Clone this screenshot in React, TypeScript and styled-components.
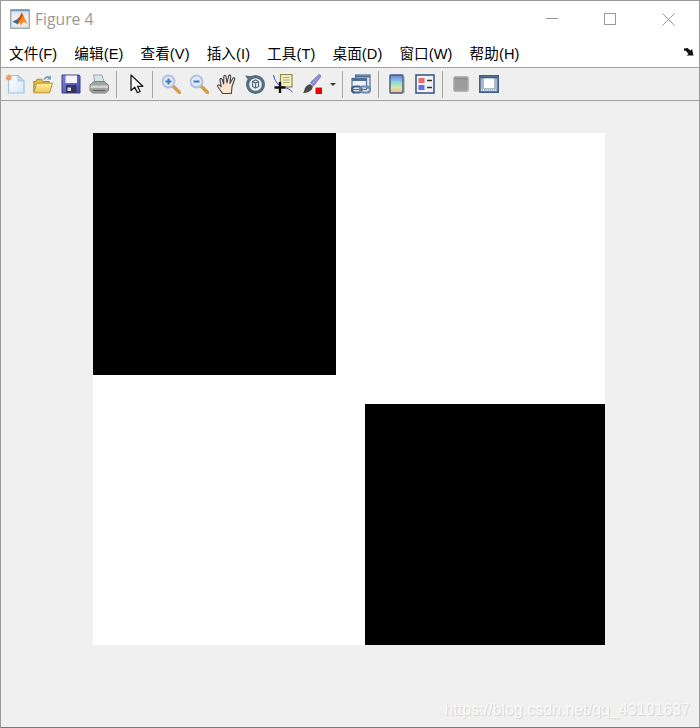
import React from 'react';
import styled, { createGlobalStyle } from 'styled-components';

const GlobalStyle = createGlobalStyle`
	html, body {
		margin: 0;
		padding: 0;
		background: #ffffff;
	}
	* {
		box-sizing: border-box;
	}
`;

const MENU_ITEMS = ['文件(F)', '编辑(E)', '查看(V)', '插入(I)', '工具(T)', '桌面(D)', '窗口(W)', '帮助(H)'];

function MatlabLogo() {
	return (
		<svg width="20" height="20" viewBox="0 0 20 20">
			<defs>
				<linearGradient id="logoBg" x1="0" y1="0" x2="0" y2="1">
					<stop offset="0" stopColor="#c9d9ea" />
					<stop offset="0.35" stopColor="#eef1f4" />
					<stop offset="1" stopColor="#e6e6e6" />
				</linearGradient>
			</defs>
			<rect x="0.7" y="0.7" width="18.6" height="18.6" fill="url(#logoBg)" stroke="#a3a9b0" strokeWidth="1.4" />
			<path d="M1 1.400h18" stroke="#6f97bf" strokeWidth="1.600" />
			<path d="M2.200 12.800l4.800-2.200 2.200-2.400-1.400 7.200-2.200-1.400z" fill="#1f6aa8" />
			<path d="M7 10.600l2.200-2.400L11.800 3.400l1.600 3.400-3.600 5.800-2 3z" fill="#c9461a" />
			<path d="M11.800 3.400c1.800 2 3 7 5.800 11.400-1.800-.6-2.800-1.800-3.800-1.800-1 0-2 2-3 3.400-.6-1.600-1-3-1.400-4.400l3.200-5z" fill="#f28c20" />
		</svg>
	);
}

function NewIcon() {
	return (
		<svg width="20" height="20" viewBox="0 0 20 20">
			<defs>
				<linearGradient id="newFill" x1="0" y1="0" x2="1" y2="1">
					<stop offset="0" stopColor="#ffffff" />
					<stop offset="1" stopColor="#d6e8fa" />
				</linearGradient>
			</defs>
			<path d="M3.500 1.500h9.500l6 5.500v12H3.500z" fill="url(#newFill)" stroke="#a4c2e6" strokeWidth="1.200" />
			<path d="M13 1.500v5.500h6z" fill="#c6dcf4" stroke="#a4c2e6" />
			<circle cx="3.800" cy="3.800" r="2.500" fill="#ec7f4a" />
			<path d="M3.800 0v7.600M0 3.800h7.600M1.100 1.100l5.400 5.400M6.500 1.100L1.100 6.500" stroke="#f0a883" strokeWidth="0.900" />
		</svg>
	);
}

function OpenIcon() {
	return (
		<svg width="20" height="20" viewBox="0 0 20 20">
			<defs>
				<linearGradient id="folderFill" x1="0" y1="0" x2="0" y2="1">
					<stop offset="0" stopColor="#fff0a4" />
					<stop offset="1" stopColor="#f2c654" />
				</linearGradient>
			</defs>
			<path d="M11 5.500c1.500-2.400 3.600-3 5.600-2.200" fill="none" stroke="#7e9cb5" strokeWidth="1.600" />
			<path d="M18 1.200v4.200h-4.200z" fill="#7e9cb5" />
			<path d="M0.800 18.500V7.500h2l1-2.200h5l1 2.200h6.500v2.500" fill="#e3b94c" stroke="#a88a3a" />
			<path d="M0.800 18.800l2.800-9.600h16l-3 9.600z" fill="url(#folderFill)" stroke="#b4933a" />
		</svg>
	);
}

function SaveIcon() {
	return (
		<svg width="20" height="20" viewBox="0 0 20 20">
			<defs>
				<linearGradient id="diskFill" x1="0" y1="0" x2="1" y2="1">
					<stop offset="0" stopColor="#7c82da" />
					<stop offset="1" stopColor="#4447a8" />
				</linearGradient>
			</defs>
			<path d="M1 1h17l1 1v17H1z" fill="url(#diskFill)" stroke="#3c3f8c" />
			<rect x="4.500" y="1.500" width="11.500" height="7.500" fill="#f2f2fb" />
			<path d="M5 11h10.500v8H5z" fill="#34345e" />
			<rect x="6.500" y="13.500" width="3.500" height="3.500" fill="#dcdcea" />
		</svg>
	);
}

function PrintIcon() {
	return (
		<svg width="20" height="20" viewBox="0 0 20 20">
			<path d="M4.500 1h8.500l2.500 8.500H6z" fill="#d6e4ec" stroke="#9aa8b0" />
			<path d="M1 11l4-3.500h10l4.500 3.500v5.500l-3 2.500H3.500L1 16.500z" fill="#a4a4a4" stroke="#808080" />
			<path d="M1.500 11.500h17.500v2.500H1.500z" fill="#d2d2d2" />
			<path d="M3.500 16.500h13" stroke="#636363" strokeWidth="1.200" />
		</svg>
	);
}

function ArrowIcon() {
	return (
		<svg width="20" height="20" viewBox="0 0 20 20">
			<path d="M4 1v15.500l3.800-3.200 2.600 5.400 2.700-1.200-2.600-5.200h5.400z" fill="#f6f6f6" stroke="#1c1c1c" strokeWidth="1.300" strokeLinejoin="round" />
		</svg>
	);
}

function ZoomIcon({ $plus }: { $plus: boolean }) {
	return (
		<svg width="20" height="20" viewBox="0 0 20 20">
			<path d="M11.500 11.500l7 7" stroke="#dd9a3e" strokeWidth="3.400" strokeLinecap="round" />
			<circle cx="7.500" cy="7.500" r="6" fill="#dfeaf7" stroke="#b1bfe0" strokeWidth="1.800" />
			<path d="M4.500 7.500h6" stroke="#3f7fb0" strokeWidth="2" />
			{$plus && <path d="M7.500 4.500v6" stroke="#3f7fb0" strokeWidth="2" />}
		</svg>
	);
}

function HandIcon() {
	return (
		<svg width="20" height="20" viewBox="0 0 20 20">
			<path
				d="M5.500 19.500C4 16.500 1.300 14.500.6 12.200c-.3-1.300 1.100-1.900 2-1l1.600 1.600L3 6c-.2-1.500 1.600-2 2.200-.5l1.500 4.500L6.800 2.500C6.900 1 8.800 1 9 2.500l1 6.500L11.600 2c.3-1.400 2.200-1 2.100.4l-.8 7 2.800-5c.7-1.200 2.400-.5 1.900.8l-2.600 7.300-.6 7z"
				fill="#fbe3cf"
				stroke="#44444e"
				strokeWidth="1.100"
				strokeLinejoin="round"
			/>
		</svg>
	);
}

function RotateIcon() {
	return (
		<svg width="20" height="20" viewBox="0 0 20 20">
			<circle cx="10.500" cy="10.500" r="7.900" fill="#eef1f3" stroke="#586c80" strokeWidth="3.200" />
			<path d="M0 1.500l7 .7-2.200 6z" fill="#586c80" />
			<path d="M7.500 7.500l3-1.500 3 1.500v5l-3 1.500-3-1.500z M7.500 7.500l3 1.500 3-1.500 M10.500 9v5" fill="none" stroke="#586c80" strokeWidth="1.200" />
		</svg>
	);
}

function DataCursorIcon() {
	return (
		<svg width="20" height="20" viewBox="0 0 20 20">
			<path d="M0.500 1c1 5 4 11 11 12.500 2.500.5 5 1.500 8 4.500" fill="none" stroke="#3344dd" strokeWidth="1" />
			<rect x="7.500" y="0.500" width="11.500" height="12.500" fill="#f5f0c2" stroke="#8f8a52" strokeWidth="1.200" />
			<path d="M10 3.500h6.500M10 6h6.500M10 8.500h6.500" stroke="#b0ab75" />
			<path d="M7 8v11M1.500 13.500h11" stroke="#111111" strokeWidth="2.400" />
		</svg>
	);
}

function BrushIcon() {
	return (
		<svg width="20" height="20" viewBox="0 0 20 20">
			<path d="M8.500 8.500L16.500 1c1.200-1 3 .5 2 1.800L11.500 12z" fill="#9090dc" stroke="#6a6ab0" strokeWidth="0.800" />
			<path d="M1 19c1.500-1.500 1-4.500 3-6.500 1.500-1.500 3.500-3 5-1.800l2 1.800-1.200 3c-2.300 2.500-5 3.500-8.800 3.500z" fill="#4b4b4b" />
			<rect x="12.500" y="12.500" width="7.500" height="7.500" fill="#ffffff" />
			<rect x="13.500" y="13.500" width="6.500" height="6.500" fill="#ee0000" />
		</svg>
	);
}

function LinkIcon() {
	return (
		<svg width="20" height="20" viewBox="0 0 20 20">
			<rect x="4.500" y="1" width="14.500" height="13" fill="#dfe7f0" stroke="#4f6f94" strokeWidth="1.200" />
			<path d="M4.500 2.500h14.500" stroke="#4f6f94" strokeWidth="2" />
			<rect x="1" y="4.500" width="14.500" height="11" fill="#eef2f6" stroke="#4f6f94" strokeWidth="1.200" />
			<path d="M1 6h14.500" stroke="#4f6f94" strokeWidth="2" />
			<rect x="1" y="12.500" width="9.500" height="6" rx="3" fill="none" stroke="#3f5f88" strokeWidth="2.200" />
			<rect x="9" y="12.500" width="10" height="6" rx="3" fill="none" stroke="#6c8cae" strokeWidth="2.200" />
		</svg>
	);
}

function ColorbarIcon() {
	return (
		<svg width="16" height="20" viewBox="0 0 16 20">
			<defs>
				<linearGradient id="barFill" x1="0" y1="0" x2="0" y2="1">
					<stop offset="0" stopColor="#6a7ce0" />
					<stop offset="0.4" stopColor="#8fd8d8" />
					<stop offset="0.7" stopColor="#d8e8a0" />
					<stop offset="1" stopColor="#f4b090" />
				</linearGradient>
			</defs>
			<rect x="1" y="1" width="13" height="18" rx="1" fill="url(#barFill)" stroke="#3c5a86" strokeWidth="1.400" />
			<path d="M15.500 3v16" stroke="#c4c4c4" />
		</svg>
	);
}

function LegendIcon() {
	return (
		<svg width="20" height="20" viewBox="0 0 20 20">
			<rect x="1" y="1" width="18" height="18" fill="#f0f3f8" stroke="#3c5a86" strokeWidth="1.600" />
			<rect x="3.500" y="4" width="6" height="5" fill="#ea6a6a" />
			<rect x="3.500" y="11" width="6" height="5" fill="#6a6ae0" />
			<path d="M12 6.500h5M12 13.500h5" stroke="#333333" strokeWidth="1.400" />
		</svg>
	);
}

function GreyPanelIcon() {
	return (
		<svg width="16" height="16" viewBox="0 0 16 16">
			<rect x="0.800" y="0.800" width="14.400" height="14.400" rx="1.500" fill="#9c9c9c" stroke="#b4b4b4" strokeWidth="1.400" />
			<path d="M1.500 2.500h13" stroke="#8a8a8a" strokeWidth="1.400" />
		</svg>
	);
}

function WindowIcon() {
	return (
		<svg width="20" height="18" viewBox="0 0 20 18">
			<rect x="0.800" y="0.800" width="18.400" height="16.400" fill="#a9b8cb" stroke="#3f5c86" strokeWidth="1.600" />
			<path d="M1.500 2.500h17" stroke="#3f5c86" strokeWidth="1.600" />
			<rect x="5" y="3.500" width="10" height="9.500" fill="#ffffff" />
			<path d="M2 14.800h16" stroke="#d8dde4" strokeWidth="1.800" strokeDasharray="1 1" />
		</svg>
	);
}

function App() {
	return (
		<Frame>
			<GlobalStyle />
			<TitleBar>
				<TitleLeft>
					<MatlabLogo />
					<TitleText>Figure 4</TitleText>
				</TitleLeft>
				<WindowButtons>
					<WindowButton>
						<svg width="12" height="12" viewBox="0 0 12 12">
							<path d="M0 5.500h12" stroke="#9a9a9a" />
						</svg>
					</WindowButton>
					<WindowButton>
						<svg width="12" height="12" viewBox="0 0 12 12">
							<rect x="0.500" y="0.500" width="11" height="11" fill="none" stroke="#9a9a9a" />
						</svg>
					</WindowButton>
					<WindowButton>
						<svg width="13" height="13" viewBox="0 0 13 13">
							<path d="M0.500 0.500l12 12M12.500 0.500l-12 12" stroke="#9a9a9a" />
						</svg>
					</WindowButton>
				</WindowButtons>
			</TitleBar>
			<MenuBar>
				<MenuList>
					{MENU_ITEMS.map((item) => (
						<MenuItem key={item}>{item}</MenuItem>
					))}
				</MenuList>
				<svg width="10" height="8" viewBox="0 0 10 8">
					<path d="M0 .5L3.500 0l3 2.500L8 1l1.500 6.500H2.500L4.500 6 1.800 2.800 0 2.800z" fill="#111111" />
				</svg>
			</MenuBar>
			<ToolBar>
				<Tool><NewIcon /></Tool>
				<Tool><OpenIcon /></Tool>
				<Tool><SaveIcon /></Tool>
				<Tool><PrintIcon /></Tool>
				<Separator $left={3} $right={6} />
				<Tool><ArrowIcon /></Tool>
				<Separator $left={1} $right={4} />
				<Tool><ZoomIcon $plus /></Tool>
				<Tool><ZoomIcon $plus={false} /></Tool>
				<Tool><HandIcon /></Tool>
				<Tool><RotateIcon /></Tool>
				<Tool><DataCursorIcon /></Tool>
				<BrushTool><BrushIcon /></BrushTool>
				<DropCaret />
				<Separator $left={6} $right={4} />
				<Tool><LinkIcon /></Tool>
				<Separator $left={3} $right={4} />
				<Tool><ColorbarIcon /></Tool>
				<Tool><LegendIcon /></Tool>
				<Separator $left={3} $right={4} />
				<Tool><GreyPanelIcon /></Tool>
				<Tool><WindowIcon /></Tool>
			</ToolBar>
			<Canvas>
				<Plot>
					<Cell $black />
					<Cell />
					<Cell />
					<Cell />
					<Cell />
					<Cell />
					<Cell />
					<Cell />
					<Cell $black />
				</Plot>
				<Watermark>https://blog.csdn.net/qq_43101637</Watermark>
			</Canvas>
		</Frame>
	);
}

const Frame = styled.div`
	width: 700px;
	height: 728px;
	display: flex;
	flex-direction: column;
	border: 1px solid #9b9b9b;
	border-bottom-color: #7c7c7c;
	background: #ffffff;
	overflow: hidden;
`;

const TitleBar = styled.div`
	height: 36px;
	flex: none;
	display: flex;
	align-items: center;
	justify-content: space-between;
	padding: 0 0 0 9px;
`;

const TitleLeft = styled.div`
	display: flex;
	align-items: center;
	gap: 5px;
`;

const TitleText = styled.span`
	font-family: 'Open Sans', 'Noto Sans', sans-serif;
	font-size: 15.7px;
	color: #999999;
`;

const WindowButtons = styled.div`
	display: flex;
	align-items: center;
	padding-right: 1px;
`;

const WindowButton = styled.div`
	width: 58.5px;
	height: 30px;
	display: flex;
	align-items: center;
	justify-content: center;
`;

const MenuBar = styled.div`
	height: 31px;
	flex: none;
	display: flex;
	align-items: center;
	justify-content: space-between;
	padding: 0 5px 0 8px;
	border-bottom: 1px solid #a0a0a0;
`;

const MenuList = styled.div`
	display: flex;
	gap: 17px;
`;

const MenuItem = styled.span`
	font-family: 'Liberation Sans', 'Noto Sans CJK SC', sans-serif;
	font-size: 14.6px;
	letter-spacing: 0.1px;
	color: #000000;
`;

const ToolBar = styled.div`
	height: 33px;
	flex: none;
	display: flex;
	align-items: center;
	background: #efefef;
	border-bottom: 1px solid #a0a0a0;
`;

const Tool = styled.div`
	width: 28px;
	height: 24px;
	flex: none;
	display: flex;
	align-items: center;
	justify-content: center;

	svg {
		filter: blur(0.35px);
	}
`;

const BrushTool = styled(Tool)`
	margin-left: 1px;
`;

const DropCaret = styled.div`
	width: 0;
	height: 0;
	flex: none;
	margin-left: 4px;
	border-left: 3px solid transparent;
	border-right: 3px solid transparent;
	border-top: 3px solid #333333;
`;

const Separator = styled.div<{ $left: number; $right: number }>`
	width: 1px;
	height: 27px;
	flex: none;
	margin-left: ${({ $left }) => $left}px;
	margin-right: ${({ $right }) => $right}px;
	background: #a6a6a6;
`;

const Canvas = styled.div`
	flex: 1;
	position: relative;
	background: #f0f0f0;
	padding: 32px 0 0 92px;
`;

const Plot = styled.div`
	width: 512px;
	height: 512px;
	display: grid;
	grid-template-columns: 243px 29px 240px;
	grid-template-rows: 242px 29px 241px;
	background: #ffffff;
`;

const Cell = styled.div<{ $black?: boolean }>`
	background: ${({ $black }) => ($black ? '#000000' : 'transparent')};
`;

const Watermark = styled.div`
	position: absolute;
	right: 9px;
	bottom: 8px;
	font-family: 'Liberation Sans', sans-serif;
	font-size: 16px;
	color: #f9f9f9;
	text-shadow: 1px 1px 1px #d2d2d2;
`;

export default App;
